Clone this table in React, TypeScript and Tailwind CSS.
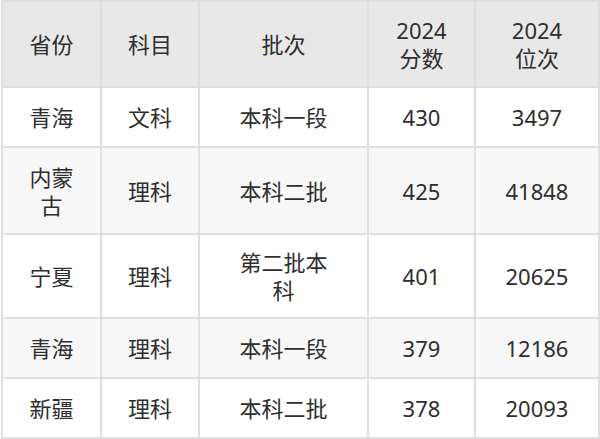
import React from 'react';

interface Row {
  province: React.ReactNode;
  subject: string;
  batch: React.ReactNode;
  score: string;
  rank: string;
  h: string;
}

const rows: Row[] = [
  { province: '青海', subject: '文科', batch: '本科一段', score: '430', rank: '3497', h: 'h-[60px]' },
  { province: <>内蒙<br />古</>, subject: '理科', batch: '本科二批', score: '425', rank: '41848', h: 'h-[87px]' },
  { province: '宁夏', subject: '理科', batch: <>第二批本<br />科</>, score: '401', rank: '20625', h: 'h-[84px]' },
  { province: '青海', subject: '理科', batch: '本科一段', score: '379', rank: '12186', h: 'h-[60px]' },
  { province: '新疆', subject: '理科', batch: '本科二批', score: '378', rank: '20093', h: 'h-[60px]' },
];

const cell = 'border-2 border-[#dedede] text-center align-middle p-0';

export default function App() {
  return (
    <div className="w-[600px] h-[439px] bg-white pl-px">
      <table
        className="table-fixed border-collapse w-[597px] text-[22px] leading-[28px] text-[#2e2e2e]"
        style={{ fontFamily: '"Noto Sans", "Noto Sans CJK SC", sans-serif' }}
      >
        <colgroup>
          <col className="w-[99px]" />
          <col className="w-[98px]" />
          <col className="w-[169px]" />
          <col className="w-[107px]" />
          <col className="w-[124px]" />
        </colgroup>
        <thead>
          <tr className="h-[86px] bg-[#e8e8e8]">
            <th className={`${cell} font-normal`}>省份</th>
            <th className={`${cell} font-normal`}>科目</th>
            <th className={`${cell} font-normal`}>批次</th>
            <th className={`${cell} font-normal`}>2024<br />分数</th>
            <th className={`${cell} font-normal`}>2024<br />位次</th>
          </tr>
        </thead>
        <tbody>
          {rows.map((r, i) => (
            <tr key={i} className={`${r.h} ${i % 2 === 0 ? 'bg-white' : 'bg-[#f7f7f7]'}`}>
              <td className={cell}>{r.province}</td>
              <td className={cell}>{r.subject}</td>
              <td className={cell}>{r.batch}</td>
              <td className={cell}>{r.score}</td>
              <td className={cell}>{r.rank}</td>
            </tr>
          ))}
        </tbody>
      </table>
    </div>
  );
}
